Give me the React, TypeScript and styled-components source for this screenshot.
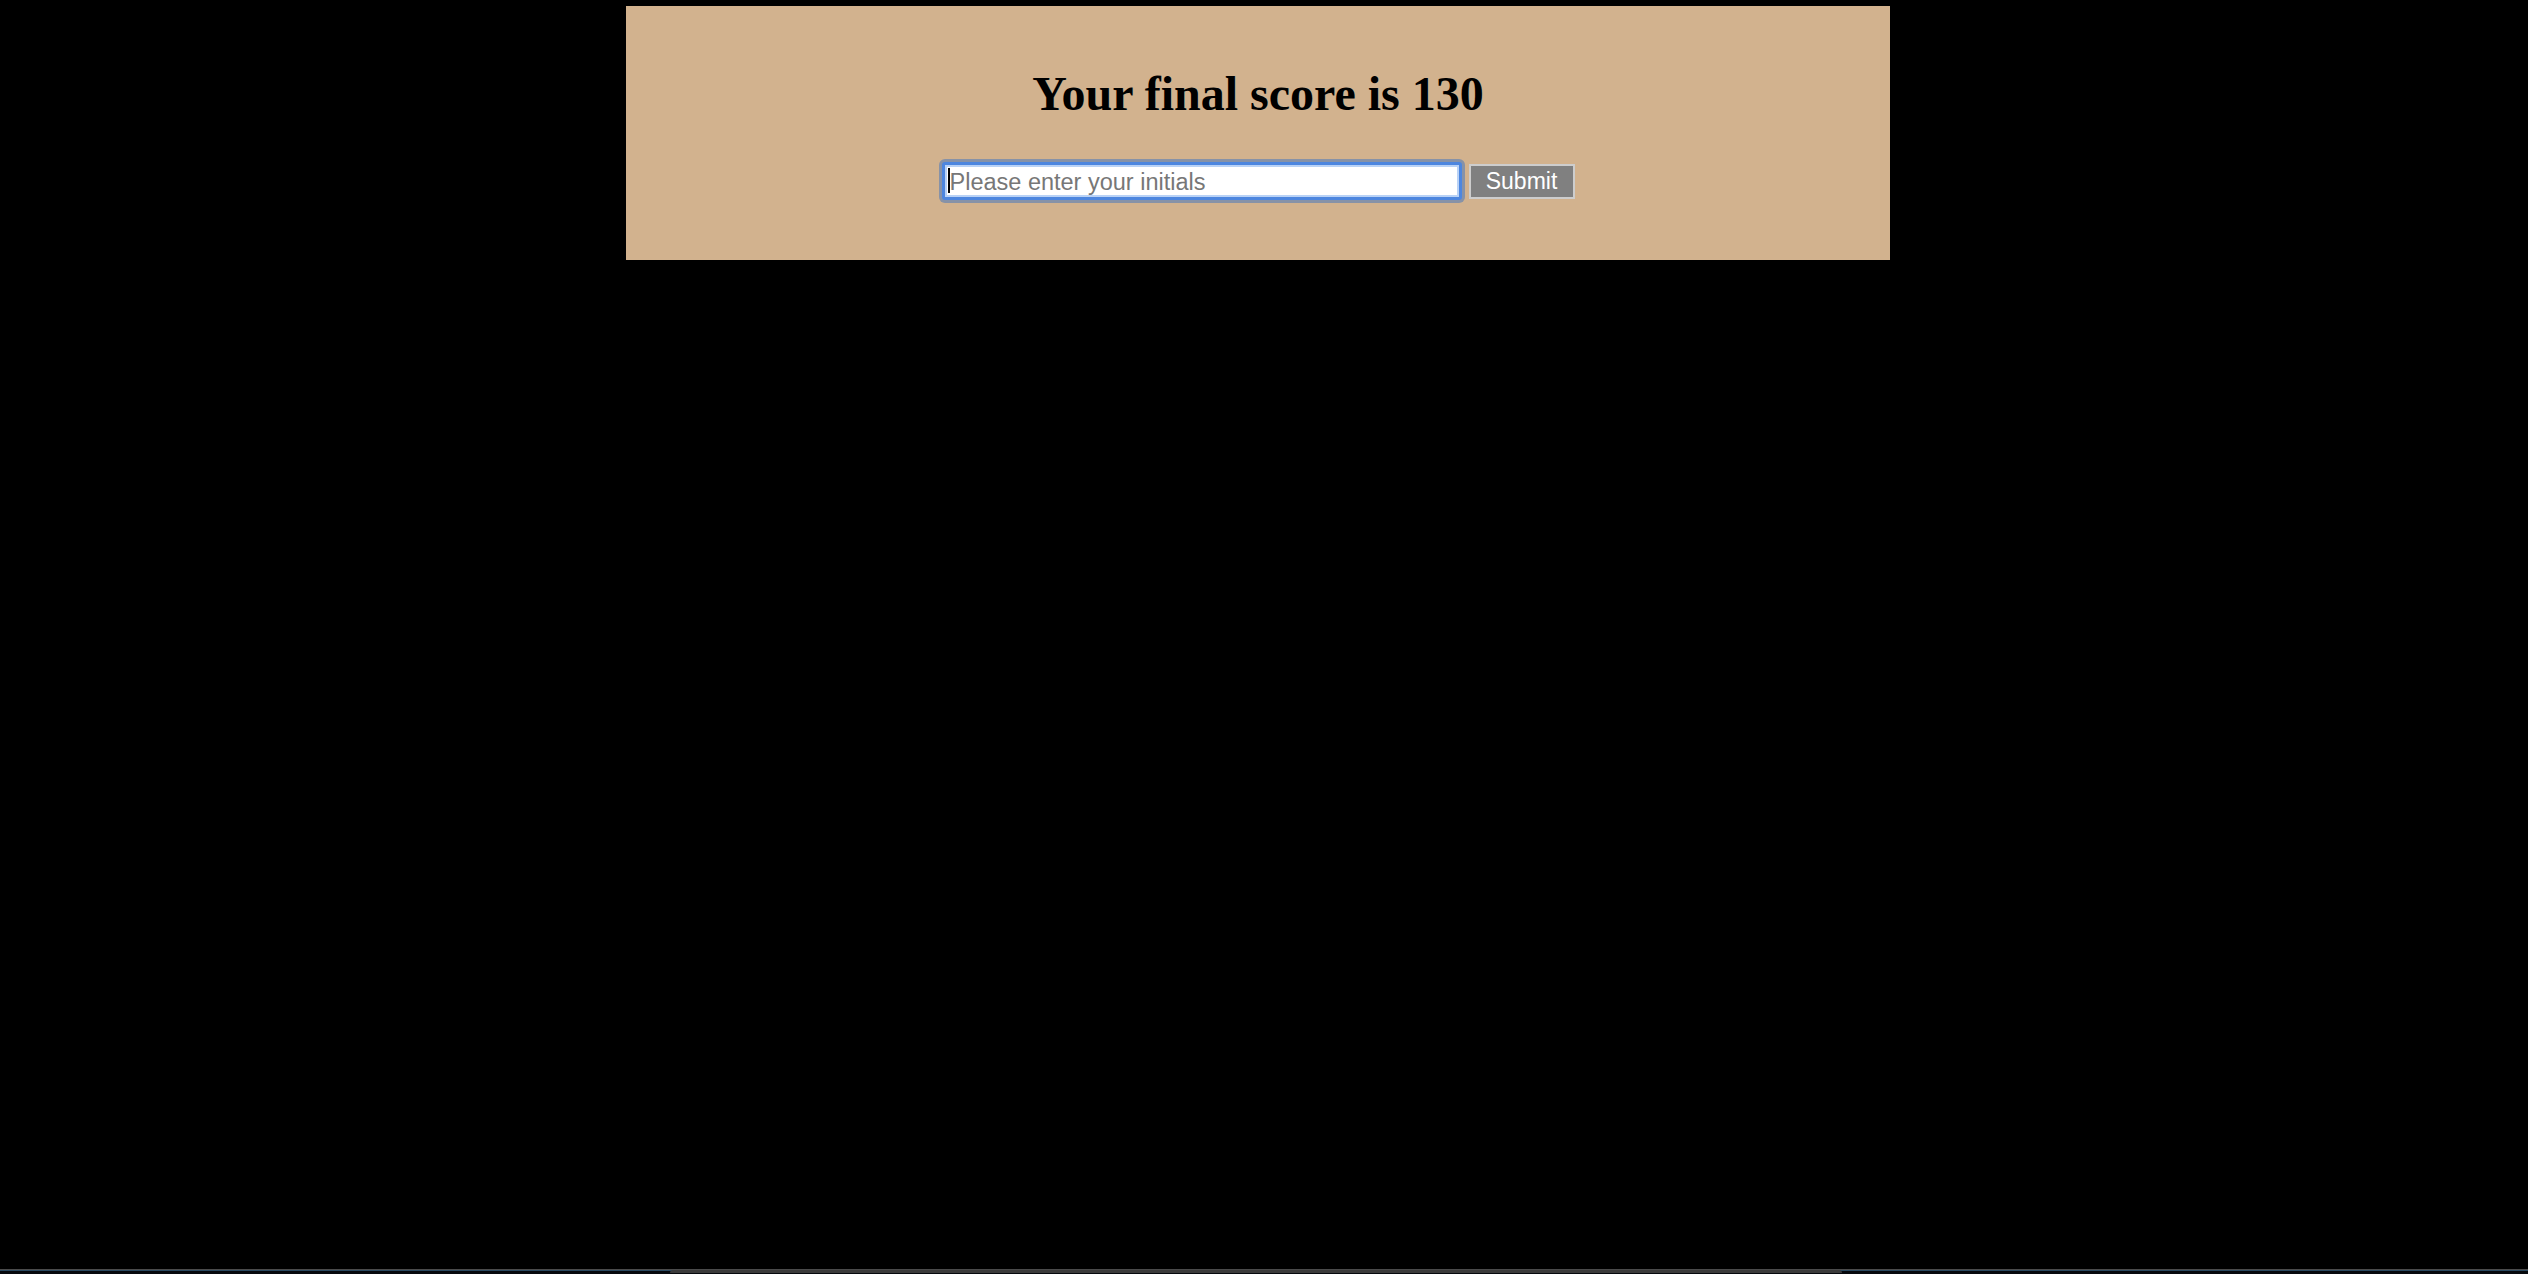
import React from "react";
import styled, { createGlobalStyle } from "styled-components";

const GlobalStyle = createGlobalStyle`
  html, body {
    margin: 0;
    padding: 0;
    background: #000000;
    height: 100%;
  }
  #root {
    height: 100%;
  }
`;

const Page = styled.div`
  display: flex;
  flex-direction: column;
  min-height: 100vh;
  background: #000000;
`;

const Panel = styled.section`
  box-sizing: border-box;
  width: 1264px;
  height: 254px;
  margin: 6px 0 0 626px;
  padding-top: 61px;
  background: #d2b28e;
  display: flex;
  flex-direction: column;
  align-items: center;
`;

const Title = styled.h1`
  margin: 0;
  font-family: "Liberation Serif", "Times New Roman", serif;
  font-weight: 700;
  font-size: 48px;
  line-height: 54px;
  color: #000000;
  letter-spacing: 0;
`;

const Form = styled.form`
  margin-top: 41px;
  display: flex;
  align-items: center;
  gap: 7px;
`;

const Field = styled.div`
  position: relative;
  display: flex;
`;

const Input = styled.input`
  box-sizing: border-box;
  width: 520px;
  height: 38px;
  padding: 2px 0 0 5px;
  border: 3px solid #4d86df;
  border-radius: 3px;
  background: #ffffff;
  box-shadow: inset 0 0 0 2px #b9d2f6, 0 0 0 3px rgba(110, 135, 175, 0.75);
  font-family: "Liberation Sans", Arial, sans-serif;
  font-size: 23.5px;
  color: #111111;
  outline: none;
  caret-color: transparent;

  &::placeholder {
    color: #777777;
    opacity: 1;
  }
`;

const Caret = styled.span`
  position: absolute;
  left: 6px;
  top: 6px;
  width: 2px;
  height: 25px;
  background: #000000;
`;

const Button = styled.button`
  box-sizing: border-box;
  width: 106px;
  height: 35px;
  padding: 1px 0 0;
  border: 2px solid #cdcdcd;
  background: #808080;
  color: #ffffff;
  font-family: "Liberation Sans", Arial, sans-serif;
  font-size: 23px;
  line-height: 1;
  cursor: pointer;
`;

const Spacer = styled.div`
  flex: 1;
`;

const BottomEdge = styled.div`
  display: flex;
  flex-direction: column;
`;

const EdgeLine = styled.div`
  height: 1px;
  background: #4a4a4a;
`;

const EdgeBand = styled.div`
  height: 3px;
  background: #06090d;
  display: flex;
  padding-left: 670px;
  border-top: 1px solid #2a4a62;
`;

const EdgeTab = styled.div`
  width: 1172px;
  height: 3px;
  margin-top: -1px;
  border-radius: 4px 4px 0 0;
  background: #3b3b3b;
`;

export default function App() {
  return (
    <>
      <GlobalStyle />
      <Page>
        <Panel>
          <Title>Your final score is 130</Title>
          <Form onSubmit={(e) => e.preventDefault()}>
            <Field>
              <Input type="text" placeholder="Please enter your initials" />
              <Caret />
            </Field>
            <Button type="submit">Submit</Button>
          </Form>
        </Panel>
        <Spacer />
        <BottomEdge>
          <EdgeLine />
          <EdgeBand>
            <EdgeTab />
          </EdgeBand>
        </BottomEdge>
      </Page>
    </>
  );
}
